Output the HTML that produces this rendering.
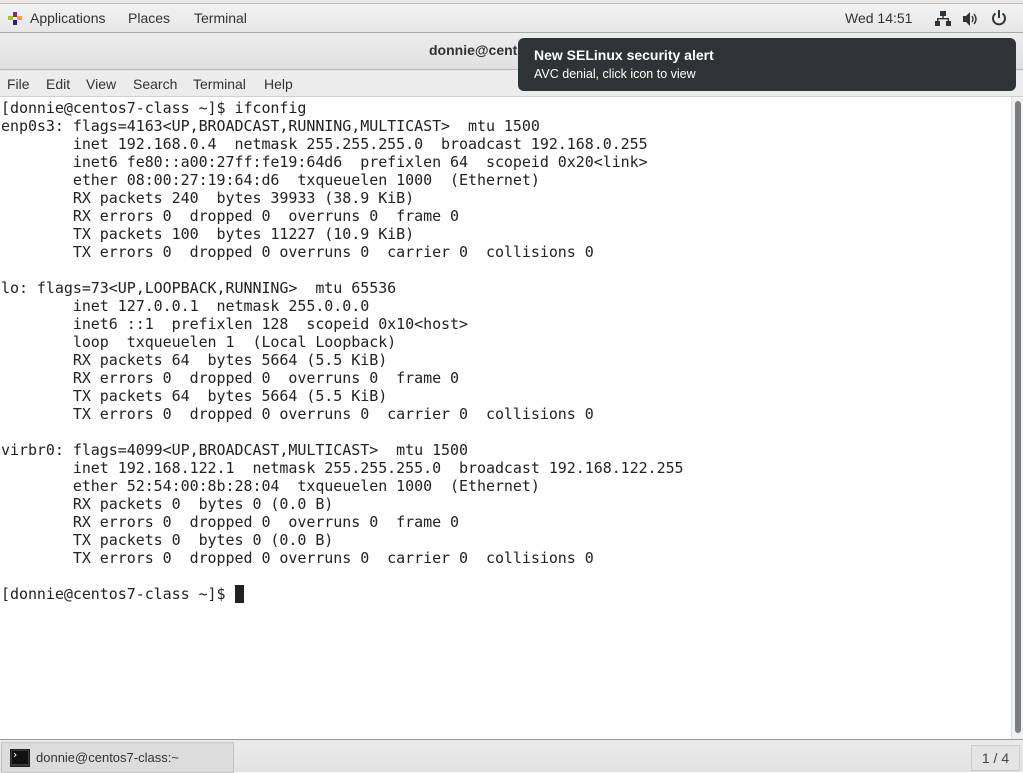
<!DOCTYPE html>
<html><head><meta charset="utf-8"><style>
*{margin:0;padding:0;box-sizing:border-box}
body{width:1023px;height:772px;overflow:hidden;position:relative;background:#fff;font-family:"Liberation Sans",sans-serif}
.strip{position:absolute;left:0;top:0;width:1023px;height:4px;background:#ece9e4;border-bottom:1px solid #bdbab5}
.top{position:absolute;left:0;top:4px;width:1023px;height:29px;background:linear-gradient(#f2f2f2,#e6e6e6);border-bottom:1px solid #a8a8a8;font-size:14px;color:#2e3436}
.top span{position:absolute;top:6px}
.title{position:absolute;left:0;top:33px;width:1023px;height:37px;background:linear-gradient(#ededed,#e0e0e0);border-bottom:1px solid #b6b6b6;font-size:14px;font-weight:bold;color:#2e3436}
.menu{position:absolute;left:0;top:70px;width:1023px;height:27px;background:#ececec;border-bottom:1px solid #cfcfcf;font-size:14px;color:#2e3436}
.menu span{position:absolute;top:6px}
.term{position:absolute;left:1px;top:99px;font-family:"DejaVu Sans Mono",monospace;font-size:15px;letter-spacing:-0.05px;line-height:18px;white-space:pre;color:#222}
.sb{position:absolute;left:1011px;top:97px;width:12px;height:642px;background:#f0f0f0;border-left:1px solid #ddd}
.sb div{position:absolute;left:3px;top:4px;width:6px;height:632px;background:#7b7e80;border-radius:3px}
.note{position:absolute;left:518px;top:38px;width:498px;height:53px;background:#2e3436;border-radius:6px;color:#fff}
.bot{position:absolute;left:0;top:739px;width:1023px;height:33px;background:linear-gradient(#ebebeb,#e2e2e2);border-top:1px solid #999}
.task{position:absolute;left:1px;top:2px;width:233px;height:31px;background:#dcdcdc;border:1px solid #c4c4c4;font-size:13px;color:#333}
.ws{position:absolute;left:971px;top:5px;width:49px;height:26px;border:1px solid #ccc;background:#e4e4e4;font-size:14px;color:#444;text-align:center;line-height:24px}
</style></head><body>
<div class="strip"></div>
<div class="top">
<svg style="position:absolute;left:8px;top:8px" width="14" height="13" viewBox="0 0 14 13"><rect x="5" y="0" width="4" height="5" fill="#932279"/><rect x="9" y="4" width="5" height="4" fill="#efa724"/><rect x="5" y="8" width="4" height="5" fill="#262577"/><rect x="0" y="4" width="5" height="4" fill="#9ccd2a"/><rect x="5" y="5" width="4" height="3" fill="#fff"/></svg>
<span style="left:30px">Applications</span><span style="left:128px">Places</span><span style="left:194px">Terminal</span>
<span style="left:845px">Wed 14:51</span>
<svg style="position:absolute;left:935px;top:7px" width="16" height="15" viewBox="0 0 16 15" fill="#2e3436"><rect x="5" y="0" width="6" height="5"/><rect x="7.3" y="5" width="1.4" height="3"/><rect x="2" y="7" width="12" height="1.4"/><rect x="2" y="7" width="1.4" height="3"/><rect x="12.6" y="7" width="1.4" height="3"/><rect x="0" y="10" width="5" height="5"/><rect x="11" y="10" width="5" height="5"/></svg>
<svg style="position:absolute;left:963px;top:8px" width="16" height="14" viewBox="0 0 16 14"><path d="M0 4h3l4-4v14l-4-4H0z" fill="#2e3436"/><path d="M9 4q2 3 0 6M11 2q4 5 0 10" stroke="#2e3436" stroke-width="1.4" fill="none"/></svg>
<svg style="position:absolute;left:991px;top:6px" width="16" height="16" viewBox="0 0 16 16"><path d="M4.5 3.5A6 6 0 1 0 11.5 3.5" stroke="#2e3436" stroke-width="2" fill="none"/><rect x="7" y="0" width="2" height="8" fill="#2e3436"/></svg>
</div>
<div class="title"><span style="position:absolute;left:429px;top:9px">donnie@centos7-class:~</span></div>
<div class="menu"><span style="left:7px">File</span><span style="left:46px">Edit</span><span style="left:86px">View</span><span style="left:133px">Search</span><span style="left:193px">Terminal</span><span style="left:264px">Help</span></div>
<div class="term">[donnie@centos7-class ~]$ ifconfig
enp0s3: flags=4163&lt;UP,BROADCAST,RUNNING,MULTICAST&gt;  mtu 1500
        inet 192.168.0.4  netmask 255.255.255.0  broadcast 192.168.0.255
        inet6 fe80::a00:27ff:fe19:64d6  prefixlen 64  scopeid 0x20&lt;link&gt;
        ether 08:00:27:19:64:d6  txqueuelen 1000  (Ethernet)
        RX packets 240  bytes 39933 (38.9 KiB)
        RX errors 0  dropped 0  overruns 0  frame 0
        TX packets 100  bytes 11227 (10.9 KiB)
        TX errors 0  dropped 0 overruns 0  carrier 0  collisions 0

lo: flags=73&lt;UP,LOOPBACK,RUNNING&gt;  mtu 65536
        inet 127.0.0.1  netmask 255.0.0.0
        inet6 ::1  prefixlen 128  scopeid 0x10&lt;host&gt;
        loop  txqueuelen 1  (Local Loopback)
        RX packets 64  bytes 5664 (5.5 KiB)
        RX errors 0  dropped 0  overruns 0  frame 0
        TX packets 64  bytes 5664 (5.5 KiB)
        TX errors 0  dropped 0 overruns 0  carrier 0  collisions 0

virbr0: flags=4099&lt;UP,BROADCAST,MULTICAST&gt;  mtu 1500
        inet 192.168.122.1  netmask 255.255.255.0  broadcast 192.168.122.255
        ether 52:54:00:8b:28:04  txqueuelen 1000  (Ethernet)
        RX packets 0  bytes 0 (0.0 B)
        RX errors 0  dropped 0  overruns 0  frame 0
        TX packets 0  bytes 0 (0.0 B)
        TX errors 0  dropped 0 overruns 0  carrier 0  collisions 0

[donnie@centos7-class ~]$ <span style="background:#222">&nbsp;</span></div>
<div class="sb"><div></div></div>
<div class="note">
<div style="position:absolute;left:16px;top:9px;font-size:14px;font-weight:bold">New SELinux security alert</div>
<div style="position:absolute;left:16px;top:29px;font-size:12.5px">AVC denial, click icon to view</div>
</div>
<div class="bot">
<div class="task">
<svg style="position:absolute;left:8px;top:6px" width="20" height="18" viewBox="0 0 20 18"><rect x="0.5" y="0.5" width="19" height="17" fill="#3a3a3a" stroke="#222"/><rect x="2" y="2" width="16" height="13" fill="#111"/><path d="M4 4l2 2-2 2" stroke="#ddd" fill="none"/></svg>
<span style="position:absolute;left:34px;top:7px">donnie@centos7-class:~</span></div>
<div class="ws">1 / 4</div>
</div>
</body></html>
